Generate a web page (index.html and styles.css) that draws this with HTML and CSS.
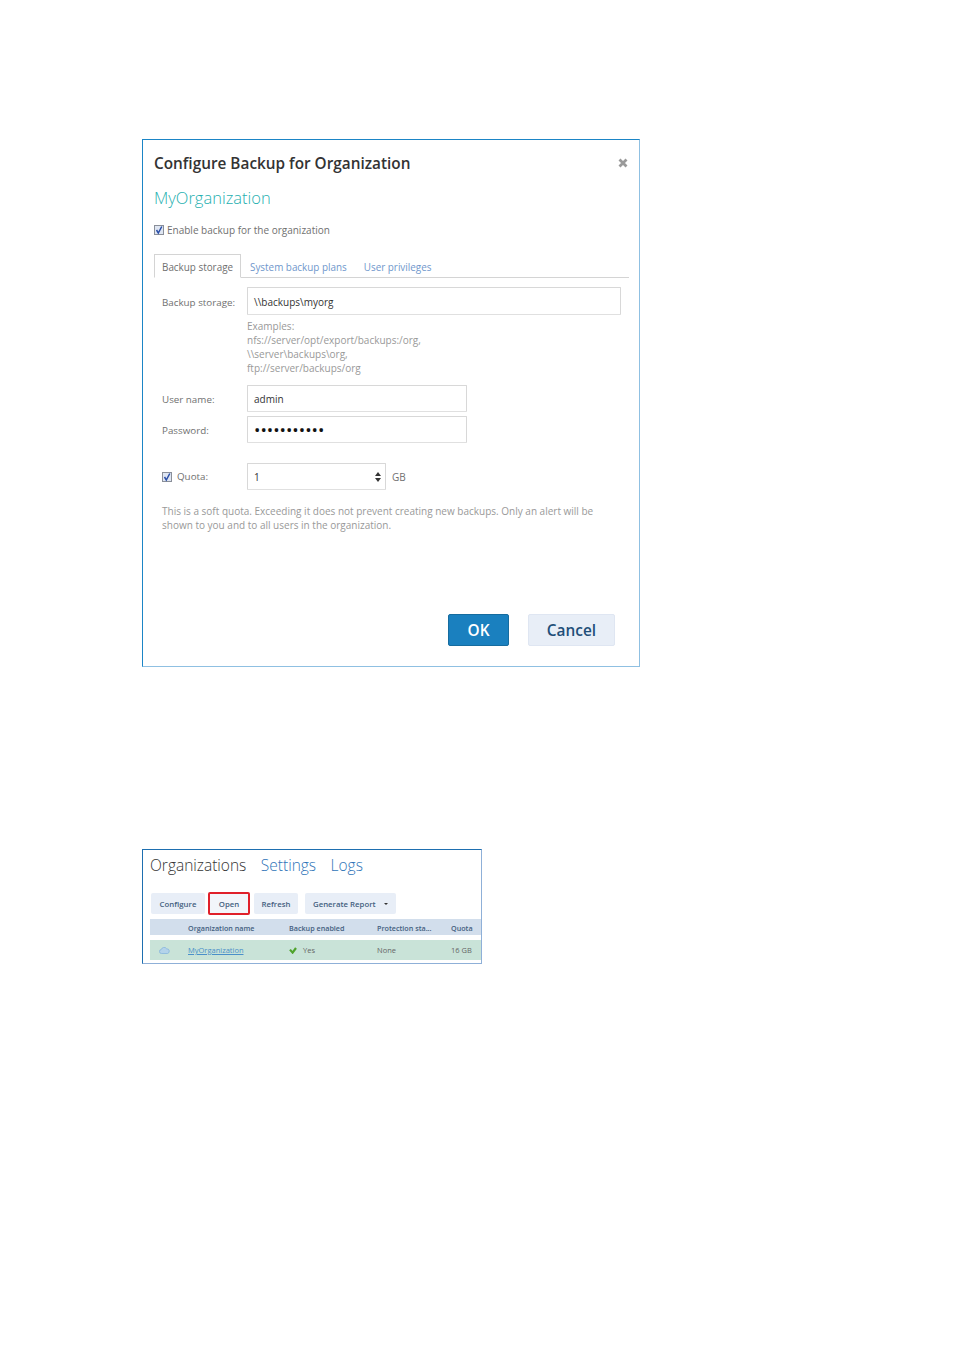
FILE: index.html
```html
<!DOCTYPE html>
<html lang="en">
<head>
  <meta charset="UTF-8" />
  <title>Configure Backup for Organization</title>
  <link rel="stylesheet" href="styles.css">
</head>
<body>
  <div class="dialog">
    <div class="dialog-head">
      <h1>Configure Backup for Organization</h1>
      <svg class="close" width="10" height="10" viewBox="0 0 10 10"><path d="M1.5 1.5l7 7M8.5 1.5l-7 7" stroke="#9a9a9a" stroke-width="2.8" fill="none"/></svg>
    </div>
    <h2>MyOrganization</h2>
    <div class="enable">
      <span class="check"><svg width="10" height="10" viewBox="0 0 10 10"><path d="M2.5 5l1.8 3L7.8 1.5" stroke="#2b4fa8" stroke-width="1.5" fill="none"/></svg></span>
      <span>Enable backup for the organization</span>
    </div>
    <div class="tabs">
      <div class="tab active">Backup storage</div>
      <div class="tab">System backup plans</div>
      <div class="tab">User privileges</div>
    </div>
    <div class="form">
      <div class="row storage-row">
        <div class="label">Backup storage:</div>
        <div class="input wide">\\backups\myorg</div>
      </div>
      <div class="examples">
        Examples:<br>
        nfs://server/opt/export/backups:/org,<br>
        \\server\backups\org,<br>
        ftp://server/backups/org
      </div>
      <div class="row user-row">
        <div class="label">User name:</div>
        <div class="input mid">admin</div>
      </div>
      <div class="row pass-row">
        <div class="label">Password:</div>
        <div class="input mid dots">•••••••••••</div>
      </div>
      <div class="row quota-row">
        <div class="label quota-label">
          <span class="check"><svg width="10" height="10" viewBox="0 0 10 10"><path d="M2.5 5l1.8 3L7.8 1.5" stroke="#2b4fa8" stroke-width="1.5" fill="none"/></svg></span>
          <span>Quota:</span>
        </div>
        <div class="input small">
          <span>1</span>
          <svg width="6" height="10" viewBox="0 0 6 10"><path d="M3 0l3 4H0zM3 10L0 6h6z" fill="#333"/></svg>
        </div>
        <div class="unit">GB</div>
      </div>
      <p class="note">This is a soft quota. Exceeding it does not prevent creating new backups. Only an alert will be shown to you and to all users in the organization.</p>
    </div>
    <div class="dialog-foot">
      <button class="btn ok">OK</button>
      <button class="btn cancel">Cancel</button>
    </div>
  </div>

  <div class="panel">
    <div class="panel-nav">
      <span class="current">Organizations</span>
      <a>Settings</a>
      <a>Logs</a>
    </div>
    <div class="toolbar">
      <button class="tool configure">Configure</button>
      <button class="tool open">Open</button>
      <button class="tool refresh">Refresh</button>
      <button class="tool report">Generate Report <i class="caret"></i></button>
    </div>
    <div class="grid-row grid-head">
      <span></span>
      <span>Organization name</span>
      <span>Backup enabled</span>
      <span>Protection sta...</span>
      <span>Quota</span>
    </div>
    <div class="grid-row grid-item">
      <span class="cloud"><svg width="11" height="7" viewBox="0 0 11 7"><path d="M2.6 6.5a2 2 0 0 1-.3-4A2.9 2.9 0 0 1 7.6 1.8a2.4 2.4 0 0 1 .9 4.7z" fill="#b4d3ea" stroke="#7fb0dc" stroke-width=".7"/></svg></span>
      <a>MyOrganization</a>
      <span class="yes"><svg width="8" height="7" viewBox="0 0 8 7"><path d="M1 2.6l2.6 3L7 1" stroke="#4fa32c" stroke-width="2.2" fill="none"/></svg>Yes</span>
      <span>None</span>
      <span>16 GB</span>
    </div>
  </div>
</body>
</html>
```

FILE: styles.css
```css
* {
  box-sizing: border-box;
  font-family: 'Open Sans', 'Noto Sans', sans-serif;
}
body {
  margin: 0;
  padding: 139px 0 0 142px;
  background: #fff;
  color: #555;
}
.dialog {
  width: 498px;
  height: 528px;
  border: 1px solid #8fc0e2;
  border-top-color: #1b85c6;
  border-left-color: #1b85c6;
  padding: 0 10px 0 11px;
  display: flex;
  flex-direction: column;
}
.dialog-head {
  display: flex;
  justify-content: space-between;
  align-items: center;
  height: 23px;
  margin-top: 11px;
}
h1 {
  margin: 0;
  font-size: 15.35px;
  font-weight: 600;
  color: #333;
  white-space: nowrap;
}
.close {
  margin-right: 1px;
}
h2 {
  margin: 13px 0 0;
  font-size: 16.5px;
  line-height: 22px;
  font-weight: 300;
  color: #1fb0b0;
}
.enable {
  display: flex;
  align-items: center;
  gap: 3px;
  margin-top: 14px;
  font-size: 10px;
  height: 14px;
  color: #707070;
}
.check {
  display: inline-flex;
  width: 10px;
  height: 10px;
  background: #dfe6f2;
  border: 1px solid #8a8f99;
  flex: none;
  align-items: center;
  justify-content: center;
}
.check svg {
  flex: none;
}
.tabs {
  display: flex;
  height: 24px;
  margin-top: 17px;
  border-bottom: 1px solid #d4d4d4;
  font-size: 9.9px;
}
.tab {
  padding: 6px 8px 0;
  margin-right: 1px;
  color: #6f97cc;
  line-height: 15px;
  white-space: nowrap;
}
.tab.active {
  width: 87px;
  height: 24px;
  border: 1px solid #d4d4d4;
  border-bottom-color: #fff;
  color: #707070;
  padding: 5px 7px 0;
}
.form {
  padding-left: 8px;
  font-size: 10px;
}
.row {
  display: flex;
  align-items: center;
}
.label {
  width: 85px;
  flex: none;
  padding-top: 1px;
  color: #707070;
  font-size: 9.8px;
}
.input {
  height: 27px;
  border: 1px solid #d8d8d8;
  border-bottom-color: #e0e0e0;
  border-radius: 1px;
  padding-left: 6px;
  display: flex;
  align-items: center;
  color: #333;
  font-size: 10px;
}
.wide {
  width: 374px;
  height: 28px;
}
.mid { width: 220px; }
.small {
  width: 139px;
  justify-content: space-between;
  padding-right: 4px;
}
.storage-row { margin-top: 9px; }
.storage-row .label,
.storage-row .input {
  padding-top: 2px;
}
.examples {
  margin: 4px 0 0 85px;
  line-height: 14px;
  color: #999;
  white-space: nowrap;
}
.user-row { margin-top: 10px; }
.pass-row { margin-top: 4px; }
.dots {
  color: #111;
  font-size: 17px;
  line-height: 1;
  white-space: nowrap;
}
.quota-row { margin-top: 20px; }
.quota-label {
  display: flex;
  align-items: center;
  gap: 5px;
  padding-top: 0;
}
.unit {
  margin-left: 6px;
  color: #707070;
}
.note {
  margin: 14px 0 0;
  width: 440px;
  line-height: 14px;
  color: #999;
}
.dialog-foot {
  margin-top: auto;
  margin-bottom: 20px;
  display: flex;
  justify-content: flex-end;
  gap: 19px;
  padding-right: 14px;
}
.btn {
  height: 32px;
  font-size: 15.4px;
  font-weight: 600;
  border-radius: 2px;
  padding: 0;
}
.ok {
  width: 61px;
  background: #1a80bf;
  border: 1px solid #166c9f;
  color: #fff;
}
.cancel {
  width: 87px;
  background: #e8eef7;
  border: 1px solid #dfe6f2;
  color: #1f4e79;
}
.panel {
  width: 340px;
  height: 115px;
  margin-top: 182px;
  border: 1px solid #8fb0d8;
  border-top-color: #1e6fb0;
  border-left-color: #1e6fb0;
}
.panel-nav {
  display: flex;
  gap: 14.5px;
  height: 24px;
  margin: 3px 0 0 7px;
  font-size: 15.5px;
  font-weight: 300;
  line-height: 24px;
  color: #2f74b8;
}
.current {
  color: #333;
}
.toolbar {
  display: flex;
  gap: 4px;
  margin: 16px 0 0 8px;
  height: 21px;
  align-items: center;
}
.tool {
  height: 21px;
  padding: 1px 0 0;
  font-size: 7.8px;
  font-weight: 600;
  background: #e8eef7;
  border: none;
  border-radius: 2px;
  color: #44607f;
  white-space: nowrap;
}
.configure {
  width: 54px;
  margin-right: -1px;
}
.tool.open {
  width: 42px;
  height: 23px;
  border: 2px solid #e0202a;
  background: #f2f5fa;
}
.refresh {
  width: 44px;
  margin-right: 3px;
}
.report {
  width: 91px;
  padding-left: 8px;
  display: flex;
  align-items: center;
  gap: 8px;
}
.caret {
  width: 0;
  height: 0;
  border: 2px solid transparent;
  border-top: 2px solid #333;
  margin-top: 2px;
}
.grid-row {
  display: grid;
  grid-template-columns: 38px 101px 88px 74px 38px;
  margin-left: 7px;
  align-items: center;
  font-size: 7.2px;
  white-space: nowrap;
}
.grid-head {
  margin-top: 5px;
  height: 16px;
  padding-top: 2px;
  background: #d2deec;
  font-weight: 600;
  color: #44607f;
}
.grid-item {
  margin-top: 5px;
  height: 20px;
  background: #c9e3d8;
  color: #666;
  font-size: 7.5px;
}
.grid-item a {
  color: #4a8fc9;
  text-decoration: underline;
}
.cloud {
  padding-left: 9px;
  display: flex;
}
.yes {
  display: flex;
  align-items: center;
  gap: 6px;
}
```
